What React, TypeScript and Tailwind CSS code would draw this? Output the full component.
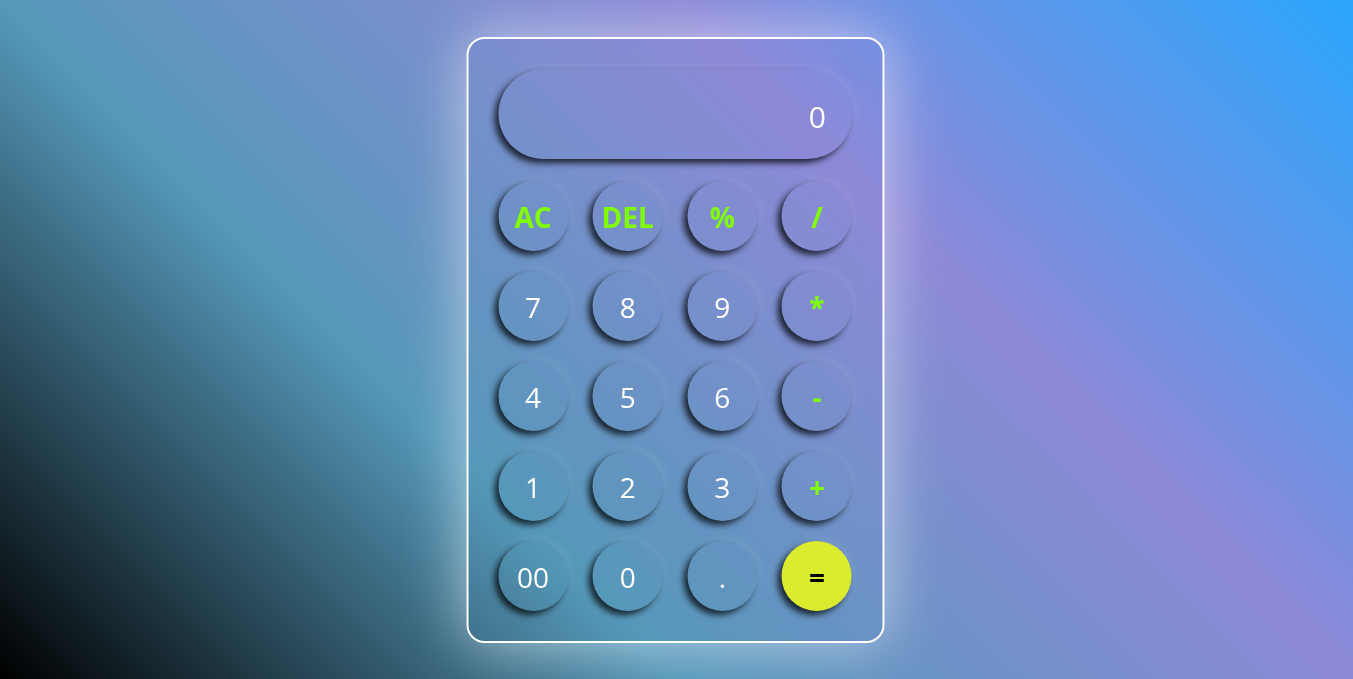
import React from "react";

type Key = { label: string; kind: "num" | "op" | "eq" };

const keys: Key[] = [
  { label: "AC", kind: "op" },
  { label: "DEL", kind: "op" },
  { label: "%", kind: "op" },
  { label: "/", kind: "op" },
  { label: "7", kind: "num" },
  { label: "8", kind: "num" },
  { label: "9", kind: "num" },
  { label: "*", kind: "op" },
  { label: "4", kind: "num" },
  { label: "5", kind: "num" },
  { label: "6", kind: "num" },
  { label: "-", kind: "op" },
  { label: "1", kind: "num" },
  { label: "2", kind: "num" },
  { label: "3", kind: "num" },
  { label: "+", kind: "op" },
  { label: "00", kind: "num" },
  { label: "0", kind: "num" },
  { label: ".", kind: "num" },
  { label: "=", kind: "eq" },
];

export default function App() {
  return (
    <div className="min-h-screen w-full flex items-center justify-center bg-[linear-gradient(45deg,#000000,#5598b9,#8e89d8,#2aa6fc)] font-['Open_Sans',sans-serif]">
      {/* calculator */}
      <div className="w-[418px] h-[606px] -translate-x-[1.5px] border-2 border-white rounded-[18px] p-[30px] shadow-[0_0_60px_rgba(255,255,255,0.55)] backdrop-blur-sm">
        <div className="h-[90px] rounded-full flex items-center justify-end pr-[26px] pt-[5px] text-white text-[30px] shadow-[-4px_4px_6px_rgba(0,0,0,0.75),3px_-3px_8px_rgba(255,255,255,0.08)]">
          0
        </div>
        <div className="mt-[22px] grid grid-cols-[repeat(4,70px)] justify-between gap-y-[20px]">
          {keys.map(k => (
            <button
              key={k.label}
              className={
                "w-[70px] h-[70px] rounded-full flex items-center justify-center pt-[2px] text-[28px] leading-none shadow-[-4px_4px_6px_rgba(0,0,0,0.75),3px_-3px_8px_rgba(255,255,255,0.08)] " +
                (k.kind === "num"
                  ? "text-white"
                  : k.kind === "op"
                  ? "text-[#80ff00] font-bold"
                  : "bg-[#dbeb2e] text-black font-bold")
              }
            >
              {k.label}
            </button>
          ))}
        </div>
      </div>
    </div>
  );
}
